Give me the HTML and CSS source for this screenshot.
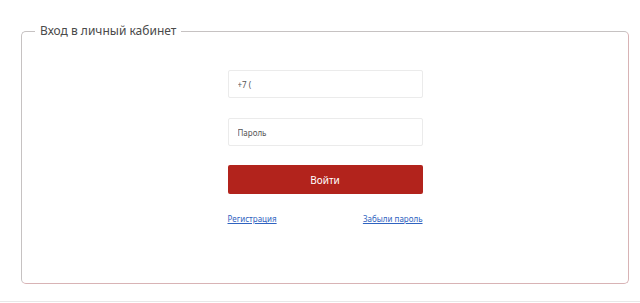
FILE: index.html
```html
<!DOCTYPE html>
<html lang="ru">
  <head>
    <meta charset="UTF-8" />
    <meta name="viewport" content="width=device-width, initial-scale=1.0" />
    <title>Вход в личный кабинет</title>
    <link rel="stylesheet" href="styles.css">
  </head>
  <body>
    <div class="page">
      <fieldset class="login-box">
        <legend>Вход в личный кабинет</legend>
        <form class="login-form">
          <input type="tel" placeholder="+7 (" />
          <input type="password" placeholder="Пароль" class="last" />
          <button type="submit" class="btn">Войти</button>
          <div class="links">
            <a href="#">Регистрация</a>
            <a href="#">Забыли пароль</a>
          </div>
        </form>
      </fieldset>
    </div>
    <div class="footer-line"></div>
  </body>
</html>
```
FILE: styles.css
```css
body {
  margin: 0;
  background: #fff;
  font-family: "Noto Sans", "Open Sans", sans-serif;
  color: #444;
}

.page {
  padding-top: 22px;
  height: 279px;
}

.login-box {
  margin: 0 11px 0 21px;
  padding: 0;
  height: 262px;
  border: 1px solid;
  border-color: #c6c2c2 #d8b3b5 #d8b3b5 #c6c2c2;
  border-radius: 5px;
  box-sizing: border-box;
}

.login-box legend {
  margin-left: 13px;
  padding: 0 5px;
  font-size: 12px;
  line-height: 18px;
  color: #4a4a4a;
}

.login-form {
  width: 195px;
  margin: 30px auto 0;
  display: flex;
  flex-direction: column;
}

.login-form input {
  height: 28px;
  padding: 0 9px;
  margin-bottom: 20px;
  border: 1px solid #ebebeb;
  border-radius: 2px;
  box-sizing: border-box;
  font-family: inherit;
  font-size: 8px;
  color: #555;
}

.login-form input.last {
  margin-bottom: 19px;
}

.login-form input::placeholder {
  color: #555;
}

.btn {
  height: 29px;
  border: none;
  border-radius: 2px;
  background: #b2231c;
  color: #fff;
  font-family: inherit;
  font-size: 10px;
  cursor: pointer;
}

.links {
  display: flex;
  justify-content: space-between;
  margin-top: 19px;
  font-size: 8px;
}

.links a {
  color: #2f63c0;
}

.footer-line {
  border-top: 1px solid #e8e8e8;
}
```
